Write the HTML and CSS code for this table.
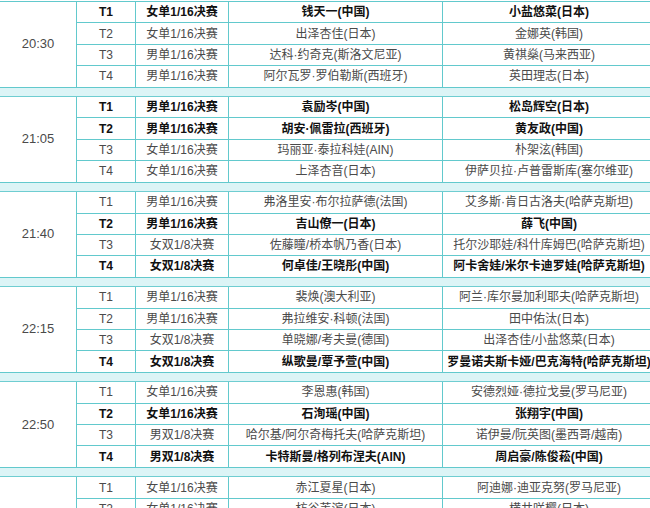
FILE: index.html
```html
<!DOCTYPE html>
<html lang="zh">
<head>
<meta charset="utf-8">
<title>赛程</title>
<link rel="stylesheet" href="styles.css">
</head>
<body>
<table class="sched">
<colgroup>
<col class="c-time"><col class="c-table"><col class="c-event"><col class="c-p1"><col class="c-p2">
</colgroup>
<tbody>
<tr class="b"><td class="time" rowspan="4">20:30</td><td>T1</td><td>女单1/16决赛</td><td>钱天一(中国)</td><td>小盐悠菜(日本)</td></tr>
<tr><td>T2</td><td>女单1/16决赛</td><td>出泽杏佳(日本)</td><td>金娜英(韩国)</td></tr>
<tr><td>T3</td><td>男单1/16决赛</td><td>达科·约奇克(斯洛文尼亚)</td><td>黄祺燊(马来西亚)</td></tr>
<tr><td>T4</td><td>男单1/16决赛</td><td>阿尔瓦罗·罗伯勒斯(西班牙)</td><td>英田理志(日本)</td></tr>
<tr class="sep"><td colspan="5"></td></tr>

<tr class="b"><td class="time" rowspan="4">21:05</td><td>T1</td><td>男单1/16决赛</td><td>袁励岑(中国)</td><td>松岛辉空(日本)</td></tr>
<tr class="b"><td>T2</td><td>男单1/16决赛</td><td>胡安·佩雷拉(西班牙)</td><td>黄友政(中国)</td></tr>
<tr><td>T3</td><td>女单1/16决赛</td><td>玛丽亚·泰拉科娃(AIN)</td><td>朴架泫(韩国)</td></tr>
<tr><td>T4</td><td>女单1/16决赛</td><td>上泽杏音(日本)</td><td>伊萨贝拉·卢普雷斯库(塞尔维亚)</td></tr>
<tr class="sep"><td colspan="5"></td></tr>

<tr><td class="time" rowspan="4">21:40</td><td>T1</td><td>男单1/16决赛</td><td>弗洛里安·布尔拉萨德(法国)</td><td>艾多斯·肯日古洛夫(哈萨克斯坦)</td></tr>
<tr class="b"><td>T2</td><td>男单1/16决赛</td><td>吉山僚一(日本)</td><td>薛飞(中国)</td></tr>
<tr><td>T3</td><td>女双1/8决赛</td><td>佐藤瞳/桥本帆乃香(日本)</td><td>托尔沙耶娃/科什库姆巴(哈萨克斯坦)</td></tr>
<tr class="b"><td>T4</td><td>女双1/8决赛</td><td>何卓佳/王晓彤(中国)</td><td>阿卡舍娃/米尔卡迪罗娃(哈萨克斯坦)</td></tr>
<tr class="sep"><td colspan="5"></td></tr>

<tr><td class="time" rowspan="4">22:15</td><td>T1</td><td>男单1/16决赛</td><td>裴焕(澳大利亚)</td><td>阿兰·库尔曼加利耶夫(哈萨克斯坦)</td></tr>
<tr><td>T2</td><td>男单1/16决赛</td><td>弗拉维安·科顿(法国)</td><td>田中佑汰(日本)</td></tr>
<tr><td>T3</td><td>女双1/8决赛</td><td>单晓娜/考夫曼(德国)</td><td>出泽杏佳/小盐悠菜(日本)</td></tr>
<tr class="b"><td>T4</td><td>女双1/8决赛</td><td>纵歌曼/覃予萱(中国)</td><td>罗曼诺夫斯卡娅/巴克海特(哈萨克斯坦)</td></tr>
<tr class="sep"><td colspan="5"></td></tr>

<tr><td class="time" rowspan="4">22:50</td><td>T1</td><td>女单1/16决赛</td><td>李恩惠(韩国)</td><td>安德烈娅·德拉戈曼(罗马尼亚)</td></tr>
<tr class="b"><td>T2</td><td>女单1/16决赛</td><td>石洵瑶(中国)</td><td>张翔宇(中国)</td></tr>
<tr><td>T3</td><td>男双1/8决赛</td><td>哈尔基/阿尔奇梅托夫(哈萨克斯坦)</td><td>诺伊曼/阮英图(墨西哥/越南)</td></tr>
<tr class="b"><td>T4</td><td>男双1/8决赛</td><td>卡特斯曼/格列布涅夫(AIN)</td><td>周启豪/陈俊菘(中国)</td></tr>
<tr class="sep"><td colspan="5"></td></tr>

<tr><td class="time" rowspan="4">23:25</td><td>T1</td><td>女单1/16决赛</td><td>赤江夏星(日本)</td><td>阿迪娜·迪亚克努(罗马尼亚)</td></tr>
<tr><td>T2</td><td>女单1/16决赛</td><td>枋谷芙滨(日本)</td><td>横井咲樱(日本)</td></tr>
<tr><td>T3</td><td>女单1/16决赛</td><td>伊藤美诚(日本)</td><td>金河英(韩国)</td></tr>
<tr><td>T4</td><td>男单1/16决赛</td><td>林诗栋(中国)</td><td>卡纳克·贾(美国)</td></tr>
</tbody>
</table>
</body>
</html>
```

FILE: styles.css
```css
html, body {
  margin: 0;
  padding: 0;
  background: #ffffff;
}

.sched {
  border-collapse: collapse;
  table-layout: fixed;
  width: 656px;
  margin: 1px 0 0 -1px;
  font-family: "Liberation Sans", "Noto Sans CJK SC", Arial, sans-serif;
  font-size: 12px;
  color: #4a4a4a;
}

.c-time { width: 77px; }
.c-table { width: 59px; }
.c-event { width: 93px; }
.c-p1 { width: 214px; }
.c-p2 { width: 213px; }

.sched td {
  border: 1px solid #62c9cd;
  height: 20.4px;
  padding: 0;
  text-align: center;
  vertical-align: middle;
  white-space: nowrap;
  overflow: hidden;
  line-height: 14px;
}

.sched td.time {
  font-size: 13px;
  color: #4a4a4a;
  font-weight: normal;
}

.sched tr.b td {
  font-weight: bold;
  color: #111111;
}

.sched tr.b td.time {
  font-weight: normal;
  color: #4a4a4a;
}

.sched tr.sep td {
  height: 8.5px;
  background: #dcf4f6;
  border-top: 1px solid #6fcdd1;
  border-bottom: 1px solid #6fcdd1;
}
```
